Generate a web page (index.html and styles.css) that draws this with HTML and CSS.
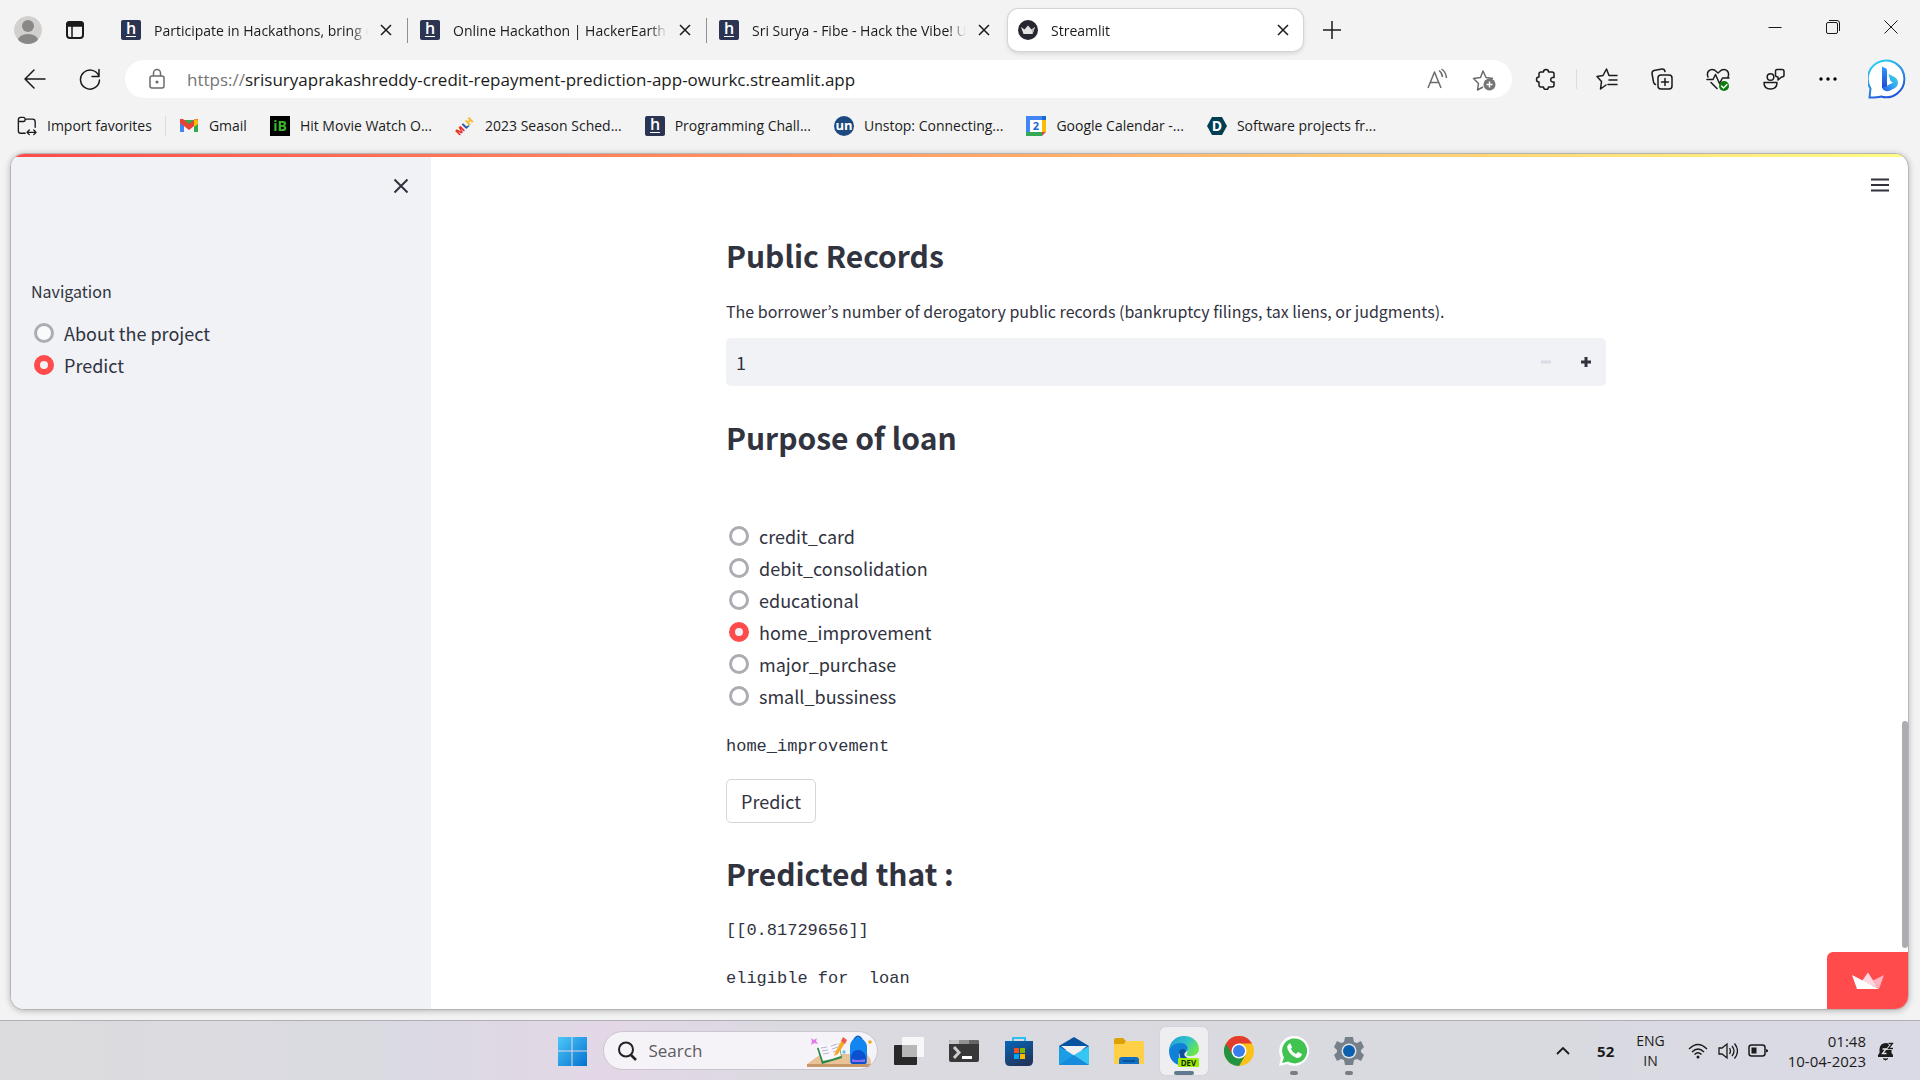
FILE: index.html
```html
<!DOCTYPE html>
<html lang="en">
  <head>
    <meta charset="UTF-8">
    <meta name="viewport" content="width=device-width, initial-scale=1.0">
    <title>Streamlit</title>
    <link rel="stylesheet" href="styles.css">
  </head>
  <body>
    <!-- Tab strip -->
    <header class="tab-strip">
      <button class="icon-btn profile" aria-label="Profile">
        <svg width="28" height="28" viewBox="0 0 28 28"><defs><clipPath id="avatar"><circle cx="14" cy="14" r="14"/></clipPath></defs><g clip-path="url(#avatar)"><circle cx="14" cy="14" r="14" fill="#d2d0ce"/><circle cx="14" cy="10" r="6" fill="#8a8886"/><ellipse cx="14" cy="24" rx="10" ry="6" fill="#8a8886"/></g></svg>
      </button>
      <button class="icon-btn" aria-label="Tab actions">
        <svg width="20" height="20" viewBox="0 0 20 20"><rect x="2" y="2" width="16" height="16" rx="3" fill="none" stroke="#1b1b1b" stroke-width="2"/><path d="M2 6V4q0-2 2-2h12q2 0 2 2v2zM7 6v12" fill="#1b1b1b" stroke="#1b1b1b" stroke-width="1.5"/></svg>
      </button>
      <nav class="tabs">
        <div class="tab">
          <svg class="favicon" viewBox="0 0 20 20"><rect width="20" height="20" rx="2" fill="#2c3454"/><text x="10" y="14" class="h-letter">h</text><path d="M5 16.5h10" stroke="#fff"/></svg>
          <a class="tab-title" href="#">Participate in Hackathons, bring o</a>
          <button class="tab-close" aria-label="Close tab"><svg width="12" height="12" viewBox="0 0 12 12"><path d="M1 1l10 10M11 1L1 11"/></svg></button>
        </div>
        <div class="tab">
          <svg class="favicon" viewBox="0 0 20 20"><rect width="20" height="20" rx="2" fill="#2c3454"/><text x="10" y="14" class="h-letter">h</text><path d="M5 16.5h10" stroke="#fff"/></svg>
          <a class="tab-title" href="#">Online Hackathon | HackerEarth</a>
          <button class="tab-close" aria-label="Close tab"><svg width="12" height="12" viewBox="0 0 12 12"><path d="M1 1l10 10M11 1L1 11"/></svg></button>
        </div>
        <div class="tab">
          <svg class="favicon" viewBox="0 0 20 20"><rect width="20" height="20" rx="2" fill="#2c3454"/><text x="10" y="14" class="h-letter">h</text><path d="M5 16.5h10" stroke="#fff"/></svg>
          <a class="tab-title" href="#">Sri Surya - Fibe - Hack the Vibe! U</a>
          <button class="tab-close" aria-label="Close tab"><svg width="12" height="12" viewBox="0 0 12 12"><path d="M1 1l10 10M11 1L1 11"/></svg></button>
        </div>
        <div class="tab active">
          <svg class="favicon" viewBox="0 0 20 20"><circle cx="10" cy="10" r="10" fill="#262730"/><path d="M3 7l3.500 2.500L10 5.500l3.500 4L17 7l-2.500 7h-9z" fill="#e4e4e6"/><path d="M13.500 9.500L17 7l-2.500 7z" fill="#b9b9bd"/></svg>
          <a class="tab-title" href="#">Streamlit</a>
          <button class="tab-close" aria-label="Close tab"><svg width="12" height="12" viewBox="0 0 12 12"><path d="M1 1l10 10M11 1L1 11"/></svg></button>
        </div>
      </nav>
      <button class="icon-btn new-tab" aria-label="New tab">
        <svg width="18" height="18" viewBox="0 0 18 18"><path d="M9 0v18M0 9h18" stroke="#1b1b1b" stroke-width="1.500"/></svg>
      </button>
      <div class="window-controls">
        <button aria-label="Minimize"><svg width="14" height="14" viewBox="0 0 14 14"><path d="M0.500 7.500h13"/></svg></button>
        <button aria-label="Restore"><svg width="14" height="14" viewBox="0 0 14 14"><rect x="0.500" y="2.500" width="11" height="11" rx="1.500"/><path d="M3 0.500h8q2.500 0 2.500 2.500v8"/></svg></button>
        <button aria-label="Close"><svg width="14" height="14" viewBox="0 0 14 14"><path d="M0.500 0.500l13 13M13.500 0.500l-13 13"/></svg></button>
      </div>
    </header>

    <!-- Toolbar -->
    <div class="toolbar">
      <button class="icon-btn" aria-label="Back"><svg class="line-icon" width="24" height="24" viewBox="0 0 24 24"><path d="M22 12H3M11 3l-9 9 9 9"/></svg></button>
      <button class="icon-btn" aria-label="Refresh"><svg class="line-icon" width="24" height="24" viewBox="0 0 24 24"><path d="M21 9.500A9.500 9.500 0 1 0 21.500 13M21 2.500v7h-7"/></svg></button>
      <div class="address-bar">
        <svg class="grey-icon" width="20" height="22" viewBox="0 0 20 22"><rect x="3" y="8" width="14" height="12" rx="2"/><path d="M6.500 8V5a3.500 3.500 0 0 1 7 0v3"/><circle cx="10" cy="14" r="0.800" fill="#6b6b6b"/></svg>
        <a class="url" href="#"><span class="scheme">https://</span>srisuryaprakashreddy-credit-repayment-prediction-app-owurkc.streamlit.app</a>
        <button class="icon-btn" aria-label="Read aloud"><svg class="grey-icon" width="22" height="22" viewBox="0 0 22 22"><path d="M1 20L7.500 4 14 20M3.500 14.500h8M12 2.500q3 2 3.500 6.500M14.500 1q4.500 3 5 9" stroke-width="1.500"/></svg></button>
        <button class="icon-btn" aria-label="Add to favorites"><svg class="grey-icon" width="24" height="24" viewBox="0 0 24 24"><path d="M11 20l-5.500 3 1-6.500-5-5 7-1L11 4l3 6.500 7 1" stroke-width="1.500"/><circle cx="17.500" cy="17.500" r="6" fill="#757575" stroke="none"/><path d="M17.500 14.500v6M14.500 17.500h6" stroke="#fff" stroke-width="1.500"/></svg></button>
      </div>
      <div class="tools">
        <button class="icon-btn" aria-label="Extensions"><svg class="line-icon" width="22" height="22" viewBox="0 0 22 22"><path d="M8.500 4a2.500 2.500 0 0 1 5 0H17q2 0 2 2v3.500h-1.500a2.300 2.300 0 0 0 0 4.500H19v3q0 2-2 2h-3.500a2.500 2.500 0 0 1-5 0H6q-2 0-2-2v-3a2.500 2.500 0 0 1 0-5V6q0-2 2-2z"/></svg></button>
        <span class="tool-sep"></span>
        <button class="icon-btn" aria-label="Favorites"><svg class="line-icon" width="22" height="22" viewBox="0 0 22 22"><path d="M10 17l-5.500 4 1-7.500L1 8.500l6-1L10.500 1 13 7.500h8M13 12h8M12 16.500h9"/></svg></button>
        <button class="icon-btn" aria-label="Collections"><svg class="line-icon" width="22" height="22" viewBox="0 0 22 22"><rect x="7" y="7" width="14" height="14" rx="3"/><path d="M14 10.500v7M10.500 14h7M4.500 16.500q-1.500-.5-2-2.500L1 5.500Q1 3 3 2.500L11 1q2.500-.3 3 2.500"/></svg></button>
        <button class="icon-btn" aria-label="Browser essentials"><svg class="line-icon" width="24" height="24" viewBox="0 0 24 24"><path d="M2 10C0 5 4 1 8.500 3L12 6l3.500-3C20 1 24 5 22 10M1 12.500h6l2.500-5 4 9 3-5.500H23M5 15.500l6 6"/><circle cx="18" cy="19" r="5" fill="#107c10" stroke="none"/><path d="M15.500 19l2 2 3.500-3.500" stroke="#fff" stroke-width="1.300"/></svg></button>
        <button class="icon-btn" aria-label="Feedback"><svg class="line-icon" width="22" height="22" viewBox="0 0 22 22"><circle cx="7.500" cy="9" r="3.300"/><path d="M1 14.500h13q0 6.500-6.500 6.500T1 14.500zM14 1.500h5q2 0 2 2V7q0 2-2 2h-.5L15 12V9q-2.500 0-2.500-2V3.500q0-2 1.500-2z"/></svg></button>
        <button class="icon-btn" aria-label="Settings and more"><svg width="20" height="20" viewBox="0 0 20 20"><circle cx="3" cy="10" r="1.700"/><circle cx="10" cy="10" r="1.700"/><circle cx="17" cy="10" r="1.700"/></svg></button>
        <button class="icon-btn bing" aria-label="Bing">
          <svg width="40" height="40" viewBox="0 0 40 40"><defs><linearGradient id="ring" x1="0" y1="0" x2="0.500" y2="1"><stop offset="0" stop-color="#31dcf2"/><stop offset="1" stop-color="#2457dc"/></linearGradient><linearGradient id="stem" x1="0" y1="0" x2="0" y2="1"><stop offset="0" stop-color="#2f9dfa"/><stop offset="1" stop-color="#1d47d8"/></linearGradient><linearGradient id="bowl" x1="1" y1="0" x2="0" y2="1"><stop offset="0" stop-color="#3bdcd4"/><stop offset="0.500" stop-color="#35a5f3"/><stop offset="1" stop-color="#2159e6"/></linearGradient></defs><path d="M1.500 38.500l1-9A18.300 18.300 0 1 1 13 37.500q-3 1-11.500 1z" fill="#fff" stroke="url(#ring)" stroke-width="2"/><path d="M20.500 15l6 3q3.500 2 3.500 6 0 3-3 5l-6 3q-7 1-7-5h4.500l6.500-3.500-2.500-1.500z" fill="url(#bowl)"/><path d="M14 7.500l4 2q1 .5 1 2V27l-5 2z" fill="url(#stem)"/></svg>
        </button>
      </div>
    </div>

    <!-- Favorites bar -->
    <nav class="favorites">
      <a href="#"><svg class="line-icon" width="22" height="22" viewBox="0 0 22 22"><path d="M9 19H4q-2.500 0-2.500-2.500V4Q1.500 1.500 4 1.500h3q1.500 0 2 2h8q3 0 3 3v6M1.500 6H7q2 0 2-2.500M11 18h10M13.500 15.500L11 18l2.500 2.500M18.500 15.500L21 18l-2.500 2.500"/></svg>Import favorites</a>
      <span class="fav-sep"></span>
      <a href="#"><svg viewBox="0 0 20 20"><path d="M1 4v12h4V9l5 4 5-4v7h4V4" fill="#34a853"/><path d="M1 4v12h4V7z" fill="#4285f4"/><path d="M1 3h3l6 5 6-5h3v4l-9 7-9-7z" fill="#ea4335"/><path d="M15 4l3-1 1 2v3l-4 3z" fill="#fbbc04"/></svg>Gmail</a>
      <a href="#"><svg viewBox="0 0 20 20"><rect width="20" height="20"/><text x="10" y="15" class="ib-letter">iB</text></svg>Hit Movie Watch O...</a>
      <a href="#"><svg viewBox="0 0 20 20"><g transform="rotate(-45 10 10)" class="mlh-letters"><text x="-1" y="13" fill="#e73427">M</text><text x="8" y="13" fill="#1d539f">L</text><text x="13" y="13" fill="#f8b92a">H</text></g></svg>2023 Season Sched...</a>
      <a href="#"><svg viewBox="0 0 20 20"><rect width="20" height="20" rx="2" fill="#2c3454"/><text x="10" y="14" class="h-letter">h</text><path d="M5 16.500h10" stroke="#fff"/></svg>Programming Chall...</a>
      <a href="#"><svg viewBox="0 0 20 20"><circle cx="10" cy="10" r="10" fill="#1c4980"/><text x="10" y="14" class="un-letter">un</text></svg>Unstop: Connecting...</a>
      <a href="#"><svg viewBox="0 0 20 20"><path d="M0 0h20v20H0z" fill="#4285f4"/><path d="M16 4h4v12h-4z" fill="#fbbc04"/><path d="M0 16h16v4H0z" fill="#34a853"/><path d="M16 0h4v4h-4z" fill="#1967d2"/><path d="M16 16h4l-4 4z" fill="#ea4335"/><path d="M20 16v4h-4z" fill="#f3f3f3"/><path d="M4 4h12v12H4z" fill="#fff"/><text x="10" y="14" class="cal-letter">2</text></svg>Google Calendar -...</a>
      <a href="#"><svg viewBox="0 0 20 20"><path d="M5 1h10l5 9-5 9H5l-5-9z" fill="#003e54"/><text x="10" y="15" class="d-letter">D</text></svg>Software projects fr...</a>
    </nav>

    <!-- Streamlit app -->
    <div class="page-frame">
      <div class="decoration"></div>
      <div class="app">
        <aside class="sidebar">
          <button class="sidebar-close" aria-label="Close sidebar"><svg width="16" height="16" viewBox="0 0 16 16"><path d="M1.500 1.500l13 13M14.500 1.500l-13 13"/></svg></button>
          <fieldset class="radio-group">
            <legend>Navigation</legend>
            <label><input type="radio" name="page">About the project</label>
            <label><input type="radio" name="page" checked>Predict</label>
          </fieldset>
        </aside>
        <main class="main">
          <button class="menu-btn" aria-label="Main menu"><svg width="20" height="14" viewBox="0 0 20 14"><path d="M1 1.500h18M1 7h18M1 12.500h18"/></svg></button>
          <div class="content">
            <h2>Public Records</h2>
            <label class="caption" for="records">The borrower’s number of derogatory public records (bankruptcy filings, tax liens, or judgments).</label>
            <div class="number-input">
              <input id="records" type="number" value="1">
              <button disabled aria-label="Decrement"><svg width="10" height="10" viewBox="0 0 10 10"><path d="M0 5h10"/></svg></button>
              <button aria-label="Increment"><svg width="10" height="10" viewBox="0 0 10 10"><path d="M0 5h10M5 0v10"/></svg></button>
            </div>
            <h2>Purpose of loan</h2>
            <fieldset class="radio-group purpose" aria-label="Purpose of loan">
              <label><input type="radio" name="purpose">credit_card</label>
              <label><input type="radio" name="purpose">debit_consolidation</label>
              <label><input type="radio" name="purpose">educational</label>
              <label><input type="radio" name="purpose" checked>home_improvement</label>
              <label><input type="radio" name="purpose">major_purchase</label>
              <label><input type="radio" name="purpose">small_bussiness</label>
            </fieldset>
            <pre>home_improvement</pre>
            <button class="predict-btn">Predict</button>
            <h2>Predicted that :</h2>
            <pre>[[0.81729656]]</pre>
            <pre>eligible for  loan</pre>
          </div>
          <div class="scroll-thumb"></div>
          <a class="badge" href="#" aria-label="Hosted with Streamlit"><svg width="34" height="18" viewBox="0 0 34 18"><path d="M11 9l6-8.500L27 16z" fill="#ffd6e0"/><path d="M22 8.500L33 3l-5 14z" fill="#ffb3c2"/><path d="M1 3l27 14H6z" fill="#fff"/></svg></a>
        </main>
      </div>
    </div>

    <!-- Windows taskbar -->
    <footer class="taskbar">
      <div class="task-center">
        <button class="task" aria-label="Start"><svg width="30" height="30" viewBox="0 0 30 30"><defs><linearGradient id="win" x1="0" y1="0" x2="1" y2="1"><stop offset="0" stop-color="#4cc8fb"/><stop offset="1" stop-color="#0471cd"/></linearGradient></defs><path d="M1 1h13.500v13.500H1zM15.500 1H30v13.500H15.500zM1 15.500h13.500V30H1zM15.500 15.500H30V30H15.500z" fill="url(#win)"/></svg></button>
        <label class="search">
          <svg width="20" height="20" viewBox="0 0 20 20"><circle cx="9" cy="8.500" r="7" fill="none" stroke="#222" stroke-width="2"/><path d="M14 14l5 5" stroke="#222" stroke-width="2.500"/></svg>
          <input type="text" placeholder="Search" aria-label="Search">
          <svg width="66" height="34" viewBox="0 0 66 34"><path d="M0 30l14-10h46l4 6v4z" fill="#eac298"/><path d="M0 30h64l-3 3H0z" fill="#c69768"/><path d="M10 14l22-5 3 15-20 6z" fill="#2c8a43"/><path d="M11 12l11-2 3 15-9 2zM22 10l9-4 3 16-9 3z" fill="#f8f6fb"/><path d="M14 14l6-1M15 17l6-1M16 20l6-1M24 12l6-2M25 15l6-2M26 18l6-2" stroke="#b9b3cf"/><path d="M28 19l-1 3 4-2L38 9l-3-3z" fill="#f9a825"/><path d="M34 7l2-4 4 3-2 4z" fill="#f25a49"/><path d="M47 6q4-7 8 0" fill="none" stroke="#0a64c8" stroke-width="2"/><path d="M43 12q1-8 8-8t9 8v16q0 2-3 2H46q-3 0-3-3z" fill="#1286ee"/><path d="M44 23q1-7 7-7t8 7v5q0 2-2 2H46q-2 0-2-2z" fill="#0a50cf"/><path d="M45 25q6 2 13 0v3H45z" fill="#8a6df0"/><path d="M4 4l3 2 3-2-1 3 2 3-4-1-3 2 1-4z" fill="#e478f0"/><circle cx="37" cy="18" r="1.700" fill="#5ecbe0"/><circle cx="63" cy="8" r="1.700" fill="#f5a300"/></svg>
        </label>
        <button class="task" aria-label="Task view"><svg width="30" height="30" viewBox="0 0 30 30"><rect x="0" y="9" width="23" height="20" rx="1" fill="#292929"/><rect x="8" y="1" width="22" height="20" rx="1" fill="#f7f7f7"/><rect x="8" y="9" width="15" height="12" fill="#b7b7b7"/></svg></button>
        <button class="task" aria-label="Terminal"><svg width="30" height="30" viewBox="0 0 30 30"><rect y="4" width="30" height="22" rx="2" fill="#383838"/><path d="M0 8V6q0-2 2-2h8v4z" fill="#c6c6c6"/><path d="M10 4h10v4H10z" fill="#929292"/><path d="M20 4h8q2 0 2 2v2H20z" fill="#666"/><path d="M5 11l5 5.500L5 22" fill="none" stroke="#ccc" stroke-width="3"/><path d="M13 21.500h10" stroke="#fff" stroke-width="3"/></svg></button>
        <button class="task" aria-label="Microsoft Store"><svg width="30" height="30" viewBox="0 0 30 30"><defs><linearGradient id="store" x1="0" y1="0" x2="0.500" y2="1"><stop offset="0" stop-color="#0667b9"/><stop offset="1" stop-color="#20365f"/></linearGradient></defs><path d="M9 6V2h12v4" fill="none" stroke="#2bc0f3" stroke-width="2"/><path d="M1 5h28v20q0 5-5 5H6q-5 0-5-5z" fill="url(#store)"/><path d="M10 12h5v5h-5z" fill="#f25022"/><path d="M16 12h5v5h-5z" fill="#7fba00"/><path d="M10 18h5v5h-5z" fill="#00a4ef"/><path d="M16 18h5v5h-5z" fill="#ffb900"/></svg></button>
        <button class="task" aria-label="Mail"><svg width="30" height="30" viewBox="0 0 30 30"><path d="M0 10L15 1l15 9v4H0z" fill="#07539f"/><path d="M2 10h26L15 20z" fill="#f0f0f3"/><path d="M0 10l30 19H0z" fill="#1b9de6"/><path d="M30 10v19L15 19z" fill="#36c6f4"/><path d="M0 29l15-10 15 10z" fill="#168bdc"/></svg></button>
        <button class="task" aria-label="File Explorer"><svg width="30" height="30" viewBox="0 0 30 30"><path d="M0 4q0-2 2-2h7l3 3-3 5H0z" fill="#dda100"/><path d="M0 8h10l3-3h15q2 0 2 2v21H0z" fill="#ffcf48"/><path d="M5 28v-4q0-3 3-3h14q3 0 3 3v4z" fill="#1170c5"/><path d="M9 25h12" stroke="#0b4787" stroke-width="1.500"/></svg></button>
        <button class="task open current" aria-label="Microsoft Edge Dev"><svg width="32" height="32" viewBox="0 0 32 32"><defs><linearGradient id="edge" x1="0" y1="0" x2="1" y2="0.500"><stop offset="0" stop-color="#219bd6"/><stop offset="0.600" stop-color="#31c4c9"/><stop offset="1" stop-color="#68e64c"/></linearGradient></defs><path d="M1 16C1 7 8 1 16 1c9 0 15 6 15 13 0 6-8 9-13 6 3-3 1-8-4-8-8 0-13 4-13 4z" fill="url(#edge)"/><path d="M1 16c1-5 6-8 11-8 8 0 9 6 6 9-1-4-8-2-7 4 1 5 6 8 11 8C11 34 1 27 1 16z" fill="#1181d8"/><path d="M11 17c2-5 7-3 7 0-4 2 0 7 5 6l-2 6q-9-1-10-12z" fill="#0d4e9b"/><rect x="10" y="23" width="21" height="9" rx="1" fill="#98ed0c"/><text x="20.500" y="30.500" class="dev-letters">DEV</text></svg></button>
        <button class="task" aria-label="Chrome"><svg width="30" height="30" viewBox="0 0 30 30"><circle cx="15" cy="15" r="15" fill="#fbc116"/><path d="M2 7.500A15 15 0 0 0 15 30l6.500-11L15 22z" fill="#229342"/><path d="M2 7.500A15 15 0 0 1 28 7.500H15L8.500 18.700z" fill="#e33b2e"/><circle cx="15" cy="15" r="7.500" fill="#fff"/><circle cx="15" cy="15" r="6" fill="#3b7ded"/></svg></button>
        <button class="task open" aria-label="WhatsApp"><svg width="30" height="30" viewBox="0 0 30 30"><path d="M0 30l2-8A15 15 0 1 1 8 28z" fill="#fff"/><path d="M3 27l2-5.500A12.500 12.500 0 1 1 9 25.500z" fill="#40c351"/><path d="M10 8q-3 2-1 6 3 6 9 8 4 0 5-4l-4-2-2 2q-4-2-5-5l1-2-2-4z" fill="#fff"/></svg></button>
        <button class="task open" aria-label="Settings"><svg width="30" height="30" viewBox="0 0 30 30"><path d="M11 1h8l1 5 3 1 4-2 3 6-3 3v2l3 3-3 6-4-2-3 1-1 5h-8l-1-5-3-1-4 2-3-6 3-3v-2l-3-3 3-6 4 2 3-1z" fill="#76808b"/><circle cx="15" cy="15" r="7.500" fill="#dfe3e7"/><circle cx="15" cy="15" r="6" fill="#0c5eae"/></svg></button>
      </div>
      <div class="tray">
        <button aria-label="Show hidden icons"><svg width="14" height="8" viewBox="0 0 14 8"><path d="M1 7l6-6 6 6" stroke-width="1.800"/></svg></button>
        <span class="counter">52</span>
        <button class="two-line lang"><span>ENG</span><span>IN</span></button>
        <button class="status" aria-label="Network, volume and battery">
          <svg width="20" height="16" viewBox="0 0 20 16"><path d="M1 6q9-9 18 0M4 9q6-6 12 0M6.500 11.500q3.500-3.500 7 0" stroke-width="1.400"/><circle cx="10" cy="14" r="1.500" fill="#1b1b1b" stroke="none"/></svg>
          <svg width="20" height="18" viewBox="0 0 20 18"><path d="M1 6h3l5-4v14l-5-4H1zM11.500 6q2 3 0 6M14 4q4 5 0 10M16.500 1.500q6 7.500 0 15" stroke-width="1.300"/></svg>
          <svg width="20" height="14" viewBox="0 0 20 14"><rect x="1" y="1" width="16" height="11" rx="2.500" stroke-width="1.500"/><path d="M3.500 3.500h5v6h-5zM18 5l2 1v1.500l-2 1z" fill="#1b1b1b" stroke="none"/></svg>
        </button>
        <button class="two-line clock"><span>01:48</span><span>10-04-2023</span></button>
        <button aria-label="Notifications"><svg width="18" height="20" viewBox="0 0 18 20"><path d="M1 16V14l1.500-2V8Q3 2 9 2q5 0 5.500 6v4l1.500 2v2z" fill="#1b1b1b" stroke="none"/><path d="M6 17.500q2.500 3 5 0" fill="#1b1b1b"/><path d="M5.500 8h3.500l-3.500 4.500h4" stroke="#e4e3ea" stroke-width="1.300"/><path d="M11.500 2.500h4l-4 5h4.500" stroke="#e4e3ea" stroke-width="3"/><path d="M11.500 2.500h4l-4 5h4.500" stroke-width="1.300"/></svg></button>
      </div>
    </footer>
  </body>
</html>
```
FILE: styles.css
```css
* {
  box-sizing: border-box;
}

body {
  margin: 0;
  height: 100vh;
  display: flex;
  flex-direction: column;
  overflow: hidden;
  background-color: #f3f3f3;
  color: #1b1b1b;
  font-family: "Open Sans", "Noto Sans", sans-serif;
  font-size: 14px;
}

button {
  font-family: inherit;
  background: none;
  border: none;
  padding: 0;
  margin: 0;
  color: inherit;
}

a {
  color: inherit;
  text-decoration: none;
}

svg {
  display: block;
  flex: none;
}

.icon-btn {
  display: flex;
  align-items: center;
  justify-content: center;
}

.line-icon {
  fill: none;
  stroke: #1b1b1b;
  stroke-width: 1.5px;
  stroke-linejoin: round;
  stroke-linecap: round;
}

.grey-icon {
  fill: none;
  stroke: #6b6b6b;
  stroke-width: 1.5px;
  stroke-linejoin: round;
}

/* Letters inside the small logos */
.h-letter, .ib-letter, .un-letter, .cal-letter, .d-letter, .dev-letters {
  text-anchor: middle;
  font-weight: bold;
  fill: #fff;
}

.h-letter {
  font-size: 16px;
  font-weight: 600;
}

.ib-letter {
  font-size: 14px;
  fill: #3bb62b;
}

.un-letter {
  font-size: 13px;
}

.cal-letter {
  font-size: 11px;
  fill: #1967d2;
}

.d-letter {
  font-size: 14px;
}

.dev-letters {
  font-size: 8px;
  fill: #1b2b05;
}

.mlh-letters {
  font-size: 9px;
  font-weight: 800;
}

/* Tab strip */
.tab-strip {
  display: flex;
  align-items: center;
  height: 60px;
  padding-left: 14px;
}

.profile {
  margin-right: 23px;
}

.tabs {
  display: flex;
  margin-left: 24px;
}

.tab {
  display: flex;
  align-items: center;
  width: 299px;
  height: 42px;
  padding: 0 16px 0 12px;
  position: relative;
}

.tab:not(.active):not(:nth-child(3))::after {
  content: "";
  position: absolute;
  right: 0;
  top: 9px;
  height: 25px;
  border-right: 1px solid #8f8f8f;
}

.tab.active {
  width: 295px;
  margin: 0 2px;
  padding: 0 14px 0 10px;
  background: #fff;
  border-radius: 10px;
  box-shadow: 0 0 0 1px #d5d5d5, 0 2px 5px rgba(0, 0, 0, 0.15);
}

.favicon {
  width: 20px;
  height: 20px;
  overflow: visible;
}

.tab-title {
  flex: 1;
  min-width: 0;
  margin: 0 12px 0 13px;
  white-space: nowrap;
  overflow: hidden;
  -webkit-mask-image: linear-gradient(to right, #000 92%, transparent);
  mask-image: linear-gradient(to right, #000 92%, transparent);
}

.tab-close svg {
  stroke: #1b1b1b;
  stroke-width: 1.5px;
}

.new-tab {
  margin-left: 18px;
}

.window-controls {
  display: flex;
  margin-left: auto;
  height: 54px;
  align-self: flex-start;
}

.window-controls button {
  display: flex;
  align-items: center;
  justify-content: center;
  width: 58px;
}

.window-controls svg {
  fill: none;
  stroke: #1b1b1b;
}

/* Toolbar */
.toolbar {
  display: flex;
  align-items: center;
  height: 38px;
  padding: 0 12px 0 23px;
}

.toolbar > .icon-btn {
  margin-right: 31px;
}

.toolbar > .icon-btn + .icon-btn {
  margin-right: 23px;
}

.address-bar {
  flex: 1;
  display: flex;
  align-items: center;
  height: 38px;
  padding: 0 16px 0 22px;
  background: #fff;
  border-radius: 19px;
}

.url {
  flex: 1;
  margin-left: 20px;
  font-size: 17px;
}

.scheme {
  color: #757575;
}

.address-bar .icon-btn + .icon-btn {
  margin-left: 23px;
}

.tools {
  display: flex;
  align-items: center;
  gap: 33px;
  margin-left: 23px;
}

.tool-sep {
  height: 20px;
  border-left: 1px solid #dcdcdc;
  margin: 0 -14px;
}

.bing {
  margin-left: -3px;
}

/* Favorites bar */
.favorites {
  display: flex;
  align-items: center;
  height: 55px;
  padding-left: 17px;
  gap: 23px;
}

.favorites a {
  display: flex;
  align-items: center;
  gap: 10px;
  white-space: nowrap;
}

.favorites svg {
  width: 20px;
  height: 20px;
  overflow: visible;
}

.fav-sep {
  height: 20px;
  border-left: 1px solid #dcdcdc;
  margin: 0 -10px;
}

/* App page */
.page-frame {
  flex: 1;
  min-height: 0;
  display: flex;
  flex-direction: column;
  margin: 0 11px 10px 10px;
  border: 1px solid #b5b5b5;
  border-radius: 14px;
  overflow: hidden;
  background: #fff;
  box-shadow: 0 1px 6px rgba(0, 0, 0, 0.25);
  font-family: "Noto Sans CJK KR", sans-serif;
  color: #31333f;
}

.decoration {
  flex: none;
  height: 3px;
  background: linear-gradient(to right, #ff4b4b, #fffd80);
}

.app {
  flex: 1;
  min-height: 0;
  display: flex;
}

.sidebar {
  width: 420px;
  background: #f0f2f6;
  padding: 19px 20px;
  display: flex;
  flex-direction: column;
}

.sidebar-close {
  align-self: flex-end;
  padding: 2px;
  margin-bottom: 83px;
}

.sidebar-close svg {
  fill: none;
  stroke: #31333f;
  stroke-width: 2px;
}

.radio-group {
  border: none;
  margin: 0;
  padding: 0;
}

.radio-group legend {
  padding: 0;
  margin-bottom: 14px;
  font-size: 16px;
  line-height: 24px;
}

.radio-group label {
  display: flex;
  align-items: center;
  gap: 10px;
  height: 32px;
  padding-left: 3px;
  font-size: 18px;
}

.radio-group input {
  appearance: none;
  width: 20px;
  height: 20px;
  margin: 0;
  border: 3px solid #acacb3;
  border-radius: 50%;
  background: rgba(255, 255, 255, 0.6);
}

.radio-group input:checked {
  border: 6px solid #ff4b4b;
  background: #f0f2f6;
}

.main {
  flex: 1;
  position: relative;
  padding: 73px 31px 0 24px;
}

.menu-btn {
  position: absolute;
  top: 21px;
  right: 18px;
}

.menu-btn svg {
  stroke: #31333f;
  stroke-width: 2px;
}

.content {
  max-width: 880px;
  margin: 0 auto;
}

h2 {
  margin: 0;
  padding: 4px 0;
  font-size: 30px;
  line-height: 42px;
  font-weight: 600;
}

.caption {
  display: block;
  margin: 19px 0 15px;
  font-size: 16px;
  line-height: 24px;
}

.number-input {
  display: flex;
  height: 48px;
  margin-bottom: 26px;
  background: #f0f2f6;
  border-radius: 5px;
}

.number-input input {
  flex: 1;
  appearance: textfield;
  border: none;
  background: none;
  padding: 0 10px;
  color: inherit;
  font-family: inherit;
  font-size: 18px;
}

.number-input input::-webkit-inner-spin-button {
  display: none;
}

.number-input button {
  display: flex;
  align-items: center;
  justify-content: center;
  width: 40px;
}

.number-input svg {
  stroke: #31333f;
  stroke-width: 3px;
}

.number-input button:disabled svg {
  stroke: #d9dbe5;
}

.purpose {
  margin: 58px 0 19px;
}

pre {
  margin: 0;
  height: 48px;
  font-family: "Liberation Mono", monospace;
  font-size: 17px;
  line-height: 32px;
}

.predict-btn {
  display: block;
  height: 44px;
  padding: 0 14px;
  margin-bottom: 25px;
  border: 1px solid #d6d6d9;
  border-radius: 5px;
  font-size: 18px;
}

h2 + pre {
  margin-top: 17px;
}

.scroll-thumb {
  position: absolute;
  right: 0;
  bottom: 61px;
  width: 6px;
  height: 227px;
  border-radius: 3px;
  background: #acacb3;
}

.badge {
  position: absolute;
  right: 0;
  bottom: 0;
  display: flex;
  align-items: center;
  justify-content: center;
  width: 81px;
  height: 57px;
  background: #ff4b4b;
  border-radius: 6px 0 0 0;
}

/* Taskbar */
.taskbar {
  display: grid;
  grid-template-columns: 1fr auto 1fr;
  align-items: center;
  height: 60px;
  border-top: 1px solid #b0afb4;
  background: linear-gradient(to right, #dcdcde, #dadae2 20%, #e3d7e6 32%, #dadae0 42%, #d9dae0 80%, #dadae6);
}

.task-center {
  grid-column: 2;
  display: flex;
  align-items: center;
  gap: 7px;
}

.task {
  display: flex;
  align-items: center;
  justify-content: center;
  position: relative;
  width: 48px;
  height: 48px;
  border-radius: 5px;
}

.task.current {
  background: #eeeef1;
  box-shadow: 0 0 1px #aaa;
}

.task.open::after {
  content: "";
  position: absolute;
  left: 20px;
  bottom: 0;
  width: 8px;
  height: 4px;
  border-radius: 2px;
  background: #7d7b82;
}

.task.current::after {
  left: 14px;
  width: 20px;
  background: #5f7a8c;
}

.search {
  display: flex;
  align-items: center;
  width: 275px;
  height: 39px;
  padding: 0 4px 0 13px;
  border: 1px solid #c9c6cf;
  border-radius: 20px;
  background: #f5f3f8;
}

.search input {
  flex: 1;
  min-width: 0;
  border: none;
  background: none;
  padding: 0 0 0 12px;
  font-family: inherit;
  font-size: 17px;
}

.search input::placeholder {
  color: #5c5b60;
}

.tray {
  display: flex;
  align-items: center;
  justify-content: flex-end;
  padding-right: 25px;
}

.tray svg {
  fill: none;
  stroke: #1b1b1b;
}

.counter {
  margin: 0 22px 0 27px;
  font-size: 15px;
  font-weight: bold;
}

.two-line {
  display: flex;
  flex-direction: column;
  font-size: 14px;
  line-height: 20px;
}

.lang {
  align-items: center;
}

.status {
  display: flex;
  align-items: center;
  gap: 10px;
  margin: 0 20px 0 23px;
}

.clock {
  align-items: flex-end;
  margin-right: 11px;
  font-size: 15px;
}
```
